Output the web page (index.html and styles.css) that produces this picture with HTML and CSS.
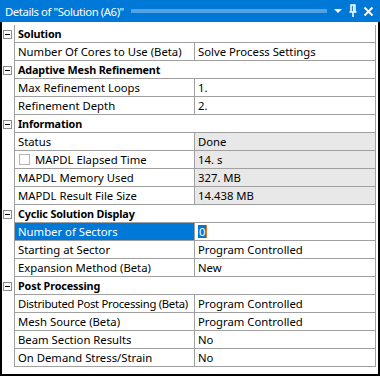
FILE: index.html
```html
<!DOCTYPE html>
<html>
<head>
    <title>Details of "Solution (A6)"</title>
    <meta name="viewport" content="width=device-width, initial-scale=1">
    <link rel="stylesheet" href="styles.css">
</head>
<body>
<div class="panel">
    <div class="titlebar">
        <span class="title">Details of "Solution (A6)"</span>
        <span class="grip"></span>
        <span class="tools">
            <svg width="10" height="10" viewBox="0 0 10 10"><path d="M1 3h8L5 7z" fill="#fff"/></svg>
            <svg width="10" height="14" viewBox="0 0 10 14"><path d="M3 1h4v7H3z M1.5 8h7 M5 8v5" fill="none" stroke="#fff" stroke-width="1.5"/><path d="M5.5 1.5v6" stroke="#fff" stroke-width="1.2"/></svg>
            <svg width="11" height="11" viewBox="0 0 11 11"><path d="M1.5 1.5l8 8M9.5 1.5l-8 8" stroke="#fff" stroke-width="1.8"/></svg>
        </span>
    </div>
    <div class="content">
        <div class="grid">
            <div class="row head"><span class="gutter"><i class="toggle"></i></span><span class="cell">Solution</span></div>
            <div class="row"><span class="gutter"></span><span class="name">Number Of Cores to Use (Beta)</span><span class="value">Solve Process Settings</span></div>

            <div class="row head"><span class="gutter"><i class="toggle"></i></span><span class="cell">Adaptive Mesh Refinement</span></div>
            <div class="row"><span class="gutter"></span><span class="name">Max Refinement Loops</span><span class="value">1.</span></div>
            <div class="row"><span class="gutter"></span><span class="name">Refinement Depth</span><span class="value">2.</span></div>

            <div class="row head"><span class="gutter"><i class="toggle"></i></span><span class="cell">Information</span></div>
            <div class="row"><span class="gutter"></span><span class="name">Status</span><span class="value readonly">Done</span></div>
            <div class="row"><span class="gutter"></span><span class="name"><i class="check"></i>MAPDL Elapsed Time</span><span class="value readonly">14. s</span></div>
            <div class="row"><span class="gutter"></span><span class="name">MAPDL Memory Used</span><span class="value readonly">327. MB</span></div>
            <div class="row"><span class="gutter"></span><span class="name">MAPDL Result File Size</span><span class="value readonly">14.438 MB</span></div>

            <div class="row head"><span class="gutter"><i class="toggle"></i></span><span class="cell">Cyclic Solution Display</span></div>
            <div class="row"><span class="gutter"></span><span class="name selected">Number of Sectors</span><span class="value"><span class="pick">0</span><span class="caret"></span></span></div>
            <div class="row"><span class="gutter"></span><span class="name">Starting at Sector</span><span class="value">Program Controlled</span></div>
            <div class="row"><span class="gutter"></span><span class="name">Expansion Method (Beta)</span><span class="value">New</span></div>

            <div class="row head"><span class="gutter"><i class="toggle"></i></span><span class="cell">Post Processing</span></div>
            <div class="row"><span class="gutter"></span><span class="name long">Distributed Post Processing (Beta)</span><span class="value">Program Controlled</span></div>
            <div class="row"><span class="gutter"></span><span class="name">Mesh Source (Beta)</span><span class="value">Program Controlled</span></div>
            <div class="row"><span class="gutter"></span><span class="name">Beam Section Results</span><span class="value">No</span></div>
            <div class="row"><span class="gutter"></span><span class="name">On Demand Stress/Strain</span><span class="value">No</span></div>
        </div>
    </div>
</div>
</body>
</html>
```

FILE: styles.css
```css
body {
    margin: 0;
    font-family: "Noto Sans", Arial, sans-serif;
    font-size: 11.3px;
    color: #000;
    background: #fff;
}
.panel {
    width: 380px;
    height: 376px;
    display: flex;
    flex-direction: column;
}
.titlebar {
    height: 22px;
    flex: none;
    background: #0078d7;
    color: #fff;
    display: flex;
    align-items: center;
    padding-left: 5px;
}
.title {
    font-size: 11.3px;
    letter-spacing: -0.4px;
    white-space: nowrap;
}
.grip {
    flex: 1;
    height: 4px;
    margin: 0 6px 0 7px;
    background: radial-gradient(circle, #5aa6e6 0.7px, transparent 0.8px) 0 0 / 2px 2px;
}
.tools {
    display: flex;
    align-items: center;
    gap: 5px;
    padding-right: 6px;
}
.content {
    flex: 1;
    border: 2px solid #000;
    border-top: none;
    padding-top: 3px;
}
.grid {
    margin-right: 2px;
    border-right: 1px solid #a0a0a0;
}
.row {
    display: flex;
    height: 18px;
}
.gutter {
    width: 13px;
    flex: none;
    box-sizing: border-box;
    border-right: 1px solid #a0a0a0;
    padding-left: 1px;
    display: flex;
    align-items: center;
}
.toggle {
    width: 9px;
    height: 9px;
    box-sizing: border-box;
    border: 1px solid #8c8c8c;
    position: relative;
    margin-top: 1px;
}
.toggle::after {
    content: "";
    position: absolute;
    left: 1px;
    right: 1px;
    top: 3px;
    height: 1px;
    background: #000;
}
.name, .value, .cell {
    border-bottom: 1px solid #a0a0a0;
    line-height: 17px;
    padding-left: 3px;
    white-space: nowrap;
    overflow: hidden;
    display: flex;
    align-items: center;
}
.name {
    width: 180px;
    flex: none;
    box-sizing: border-box;
    border-right: 1px solid #a0a0a0;
}
.long {
    letter-spacing: -0.3px;
}
.value, .cell {
    flex: 1;
}
.cell {
    font-weight: bold;
    font-size: 10.8px;
    letter-spacing: -0.15px;
}
.readonly {
    background: #e8e8e8;
}
.selected {
    background: #0078d7;
    color: #fff;
}
.check {
    width: 11px;
    height: 11px;
    box-sizing: border-box;
    border: 1px solid #b4b4b4;
    background: #fff;
    margin: 0 5px 0 1px;
}
.pick {
    background: #0078d7;
    color: #fff;
    line-height: 13px;
    padding: 0 1px;
}
.caret {
    width: 1px;
    height: 13px;
    background: #e0782a;
}
```
